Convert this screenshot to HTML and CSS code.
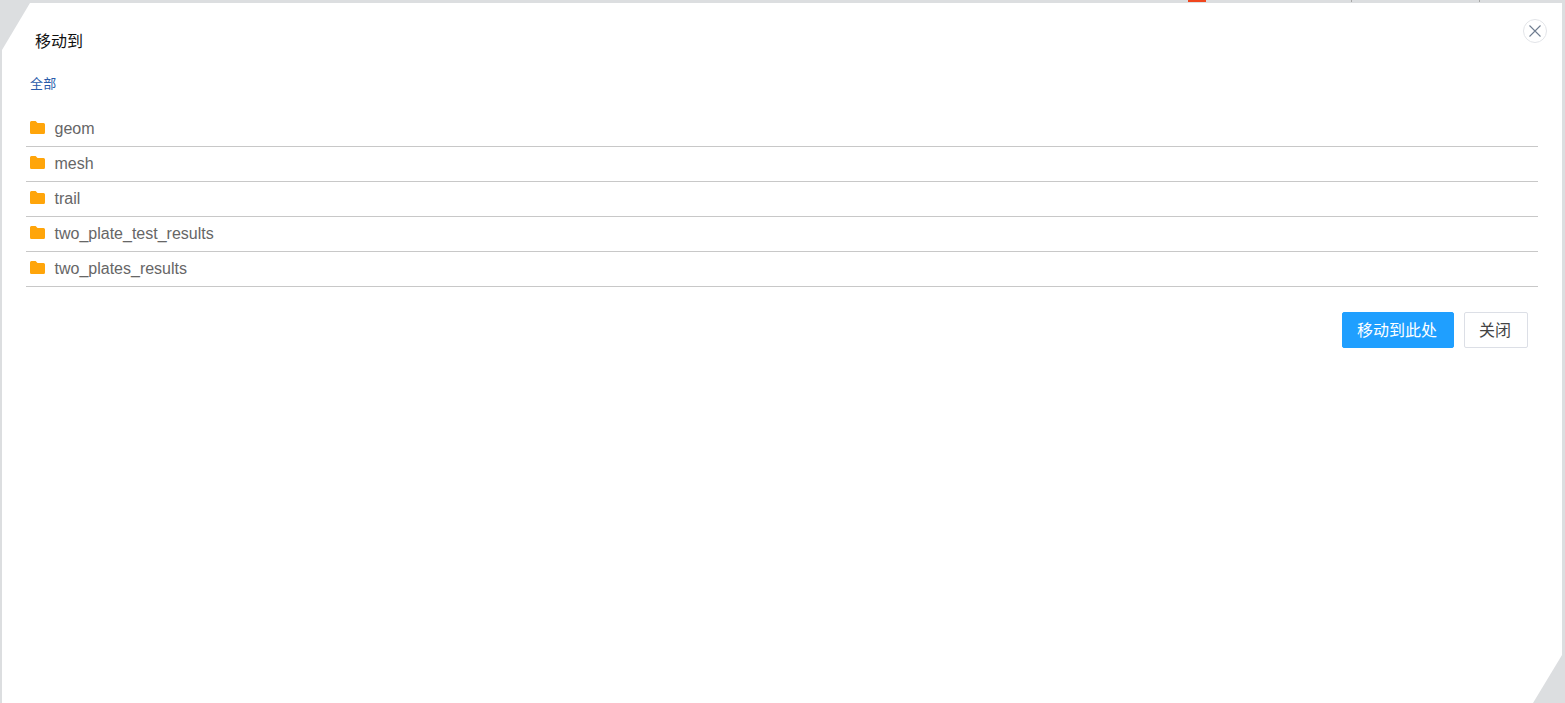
FILE: index.html
```html
<!DOCTYPE html>
<html lang="zh-CN">
<head>
<meta charset="utf-8">
<title>移动到</title>
<link rel="stylesheet" href="styles.css">
</head>
<body>
<div class="backdrop">
  <div class="behind"><span class="badge"></span><span class="tick tick-a"></span><span class="tick tick-b"></span></div>
  <section class="dialog">
    <button class="close" aria-label="关闭">
      <svg viewBox="0 0 12 12" width="12" height="12"><path d="M0.500 0.500L11.500 11.500M11.500 0.500L0.500 11.500" stroke="#6f7d90" stroke-width="1.100" fill="none"/></svg>
    </button>
    <h1 class="title">移动到</h1>
    <div class="crumb"><a>全部</a></div>
    <ul class="list">
      <li class="row"><svg class="folder" viewBox="0 0 16 13" preserveAspectRatio="none"><path d="M1.500 0H6l2 2h6.500A1.500 1.500 0 0 1 16 3.500V11.500A1.500 1.500 0 0 1 14.500 13H1.500A1.500 1.500 0 0 1 0 11.500V1.500A1.500 1.500 0 0 1 1.500 0Z"/></svg><span>geom</span></li>
      <li class="row"><svg class="folder" viewBox="0 0 16 13" preserveAspectRatio="none"><path d="M1.500 0H6l2 2h6.500A1.500 1.500 0 0 1 16 3.500V11.500A1.500 1.500 0 0 1 14.500 13H1.500A1.500 1.500 0 0 1 0 11.500V1.500A1.500 1.500 0 0 1 1.500 0Z"/></svg><span>mesh</span></li>
      <li class="row"><svg class="folder" viewBox="0 0 16 13" preserveAspectRatio="none"><path d="M1.500 0H6l2 2h6.500A1.500 1.500 0 0 1 16 3.500V11.500A1.500 1.500 0 0 1 14.500 13H1.500A1.500 1.500 0 0 1 0 11.500V1.500A1.500 1.500 0 0 1 1.500 0Z"/></svg><span>trail</span></li>
      <li class="row"><svg class="folder" viewBox="0 0 16 13" preserveAspectRatio="none"><path d="M1.500 0H6l2 2h6.500A1.500 1.500 0 0 1 16 3.500V11.500A1.500 1.500 0 0 1 14.500 13H1.500A1.500 1.500 0 0 1 0 11.500V1.500A1.500 1.500 0 0 1 1.500 0Z"/></svg><span>two_plate_test_results</span></li>
      <li class="row"><svg class="folder" viewBox="0 0 16 13" preserveAspectRatio="none"><path d="M1.500 0H6l2 2h6.500A1.500 1.500 0 0 1 16 3.500V11.500A1.500 1.500 0 0 1 14.500 13H1.500A1.500 1.500 0 0 1 0 11.500V1.500A1.500 1.500 0 0 1 1.500 0Z"/></svg><span>two_plates_results</span></li>
    </ul>
    <div class="actions">
      <button class="btn btn-primary">移动到此处</button>
      <button class="btn">关闭</button>
    </div>
  </section>
</div>
</body>
</html>
```
FILE: styles.css
```css
* { box-sizing: border-box; }
html, body { margin: 0; height: 100%; overflow: hidden; }
body {
  font-family: "Liberation Sans", "Noto Sans CJK SC", sans-serif;
  background: #dcdee0;
}
.backdrop { height: 703px; display: flex; flex-direction: column; }
.behind { height: 3px; position: relative; flex: none; }
.badge { position: absolute; left: 1188px; top: 0; width: 18px; height: 2px; background: #f0461e; }
.tick { position: absolute; top: 0; width: 1px; height: 2px; background: #a8a8a8; }
.tick-a { left: 1351px; }
.tick-b { left: 1479px; }
.dialog {
  position: relative;
  flex: 1;
  margin: 0 3px 0 2px;
  background: #fff;
  clip-path: polygon(28px 0, 100% 0, 100% 652px, 1531px 100%, 0 100%, 0 47px);
  padding: 0 24px 0 24px;
}
.close {
  position: absolute;
  top: 16px;
  right: 15px;
  width: 24px;
  height: 24px;
  padding: 0 1px 0 0;
  border: 1px solid #e2e4e8;
  border-radius: 50%;
  background: #fff;
  display: flex;
  align-items: center;
  justify-content: center;
}
.title {
  margin: 0;
  padding: 29px 0 0 9px;
  height: 63px;
  font-size: 16px;
  line-height: 20px;
  font-weight: 400;
  color: #111;
}
.crumb {
  height: 46px;
  padding: 9px 0 0 4px;
  font-size: 13px;
  line-height: 18px;
  letter-spacing: 0.3px;
  color: #2a5caa;
}
.list { list-style: none; margin: 0; padding: 0; }
.row {
  height: 35px;
  border-bottom: 1px solid #c8c8c8;
  display: flex;
  align-items: center;
  padding-left: 4px;
  font-size: 16px;
  color: #666;
}
.folder { width: 15px; height: 13px; margin-right: 9.5px; fill: #ffa50a; flex: none; position: relative; top: -2px; }
.actions {
  display: flex;
  justify-content: flex-end;
  gap: 10px;
  padding: 25px 10px 0 0;
}
.btn {
  height: 36px;
  padding: 0 16px 2px 14px;
  border: 1px solid #dcdfe6;
  border-radius: 2px;
  background: #fff;
  color: #444;
  font: 16px/20px "Noto Sans CJK SC", "Liberation Sans", sans-serif;
}
.btn-primary { background: #1f9fff; border-color: #1f9fff; color: #fff; }
```
